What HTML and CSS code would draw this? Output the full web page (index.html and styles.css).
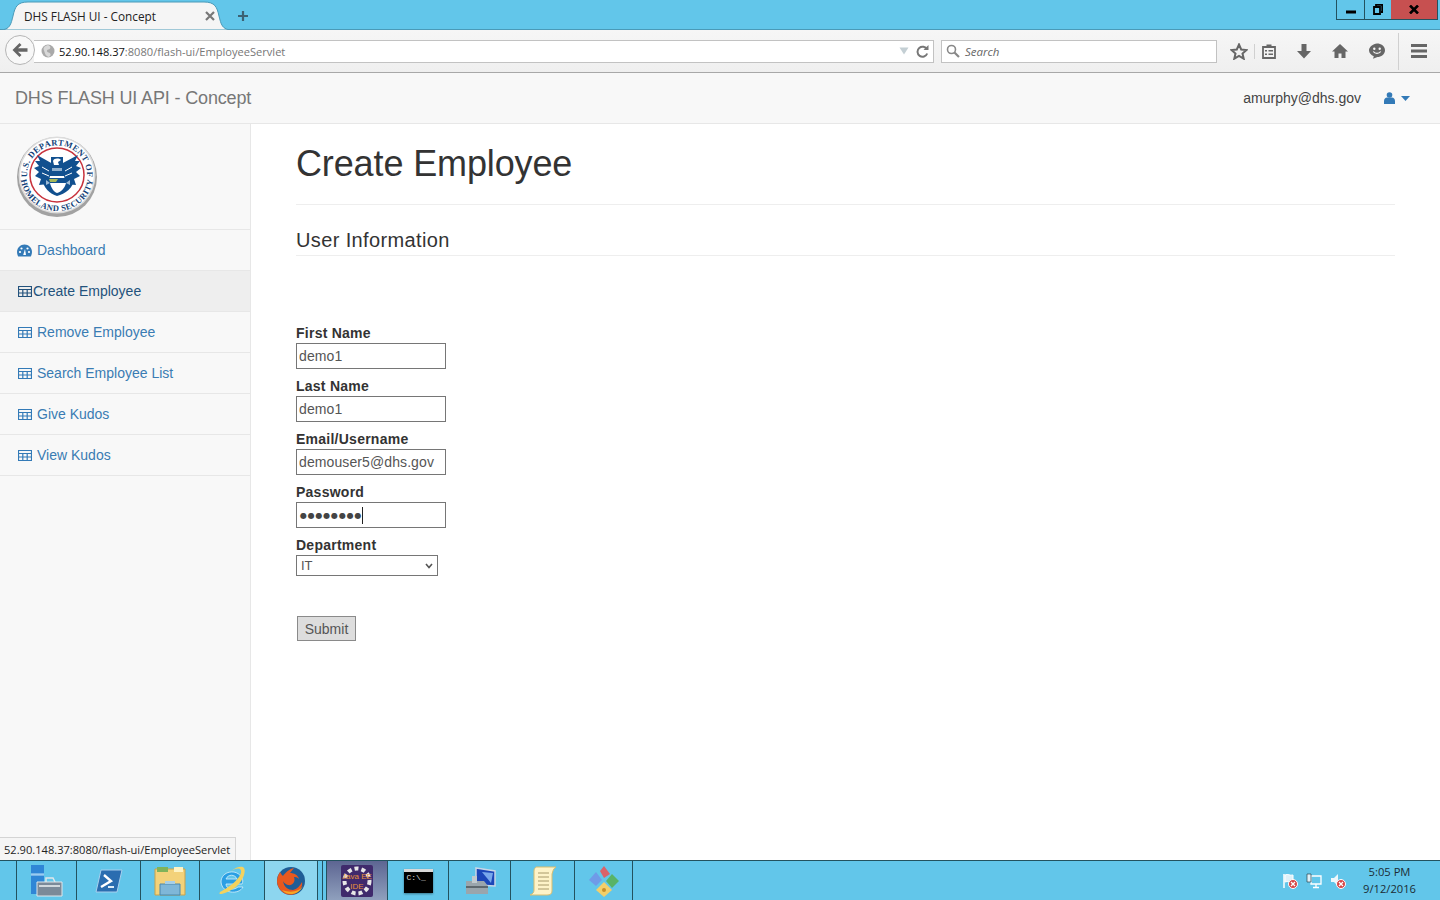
FILE: index.html
```html
<!DOCTYPE html>
<html lang="en">
<head>
  <meta charset="UTF-8" />
  <meta name="viewport" content="width=device-width, initial-scale=1.0" />
  <title>DHS FLASH UI - Concept</title>
  <link rel="stylesheet" href="styles.css">
</head>
<body>
  <div class="desktop">

    <!-- browser tabs -->
    <div class="tabstrip">
      <div class="tab">
        <svg class="tab-shape" width="228" height="30" viewBox="0 0 228 30"><path d="M0 30 C10 30 11 24 13 16 C15 7 17 2 28 2 H204 C215 2 217 7 219 16 C221 24 222 30 232 30 Z" fill="#f5f5f5" stroke="#4a9ab8"/></svg>
        <span class="tab-title">DHS FLASH UI - Concept</span>
        <svg class="tab-close" width="10" height="10" viewBox="0 0 10 10"><path d="M1 1 9 9M9 1 1 9" stroke="#777" stroke-width="2.2"/></svg>
      </div>
      <svg class="tab-new" width="12" height="12" viewBox="0 0 12 12"><path d="M6 1V11M1 6H11" stroke="#3c6274" stroke-width="2.2"/></svg>
      <div class="window-btns">
        <div class="win-btn win-min"><svg width="10" height="10" viewBox="0 0 10 10"><path d="M0 7H10" stroke="#000" stroke-width="3"/></svg></div>
        <div class="win-btn win-max"><svg width="10" height="11" viewBox="0 0 10 11"><path d="M3 2V0.8H9.2V8H8M1 3H7V10H1Z" fill="none" stroke="#000" stroke-width="1.8"/></svg></div>
        <div class="win-btn win-close"><svg width="10" height="9" viewBox="0 0 10 9"><path d="M1 0.5 9 8.5M9 0.5 1 8.5" stroke="#000" stroke-width="2.6"/></svg></div>
      </div>
    </div>

    <!-- browser toolbar -->
    <div class="toolbar">
      <div class="back-btn">
        <svg width="16" height="14" viewBox="0 0 16 14"><path d="M7.5 0 0.5 7 7.5 14 9.5 12 6 8.8H15.5V5.2H6L9.5 2Z" fill="#666"/></svg>
      </div>
      <div class="urlbar">
        <svg class="globe" width="14" height="14" viewBox="0 0 14 14"><circle cx="7" cy="7" r="6.5" fill="#a9a9a9"/><path d="M7 1C9 2 10 3 9 4.5S6 5 6 7s3 1 3.500 3-1 2.500-2 3C5 12 4 10 3.500 8S2 5 3 3.500 5 1.500 7 1Z" fill="#d8d8d8"/></svg>
        <span class="url"><b>52.90.148.37</b>:8080/flash-ui/EmployeeServlet</span>
        <svg class="url-drop" width="10" height="8" viewBox="0 0 10 8"><path d="M0.500 0.500H9.500L5 7.500Z" fill="#c4cfd4"/></svg>
        <svg class="url-reload" width="13" height="13" viewBox="0 0 13 13"><path d="M11 4.500A5 5 0 1 0 11.200 8.500" fill="none" stroke="#777" stroke-width="2"/><path d="M7.500 5H12.500V0Z" fill="#777"/></svg>
      </div>
      <div class="searchbar">
        <svg width="14" height="14" viewBox="0 0 14 14"><circle cx="5.500" cy="5.500" r="4" fill="none" stroke="#888" stroke-width="1.600"/><path d="M8.500 8.500 13 13" stroke="#888" stroke-width="2.200"/></svg>
        <span>Search</span>
      </div>
      <div class="tool-icons">
        <svg class="tool tool-star" width="18" height="17" viewBox="0 0 18 17"><path d="M9 1.500 11.200 6.500 16.500 7 12.500 10.500 13.700 15.700 9 13 4.300 15.700 5.500 10.500 1.500 7 6.800 6.500Z" fill="none" stroke="#666" stroke-width="2"/></svg>
        <i class="tool-sep"></i>
        <svg class="tool tool-list" width="14" height="15" viewBox="0 0 14 15"><path d="M1 3H13V14H1Z" fill="none" stroke="#666" stroke-width="1.800"/><path d="M4.500 0.500H9.500V3.500H4.500ZM3 6H5V7.500H3ZM6.500 6H11V7.500H6.500ZM3 9.500H5V11H3ZM6.500 9.500H11V11H6.500Z" fill="#666"/></svg>
        <svg class="tool tool-down" width="14" height="15" viewBox="0 0 14 15"><path d="M4.500 0H9.500V7H14L7 14.500 0 7H4.500Z" fill="#666"/></svg>
        <svg class="tool tool-home" width="16" height="14" viewBox="0 0 16 14"><path d="M8 0 16 7.500H13.500V14H9.500V9.500H6.500V14H2.500V7.500H0Z" fill="#666"/></svg>
        <svg class="tool tool-chat" width="16" height="16" viewBox="0 0 16 16"><path d="M8 0.500C12 0.500 16 3 16 7.200S12 14 8.500 14L4 15.800 4.800 13.200C2 12 0 10 0 7.200S4 0.500 8 0.500Z" fill="#666"/><circle cx="5.300" cy="5.800" r="1.200" fill="#f5f5f5"/><circle cx="10.700" cy="5.800" r="1.200" fill="#f5f5f5"/><path d="M4.300 8.500C6 11 10 11 11.700 8.500" fill="none" stroke="#f5f5f5" stroke-width="1.300"/></svg>
        <i class="tool-sep tool-sep-tall"></i>
        <svg class="tool tool-menu" width="16" height="14" viewBox="0 0 16 14"><path d="M0 0H16V3H0ZM0 5.500H16V8.500H0ZM0 11H16V14H0Z" fill="#666"/></svg>
      </div>
    </div>

    <!-- app header -->
    <header class="navbar">
      <div class="brand">DHS FLASH UI API - Concept</div>
      <div class="user">
        <span class="user-name">amurphy@dhs.gov</span>
        <svg class="user-icon" width="11" height="12" viewBox="0 0 11 12"><circle cx="5.500" cy="3" r="2.800" fill="#337ab7"/><path d="M0 12V9C0 7 1.500 5.500 3 5.500H8C9.500 5.500 11 7 11 9V12Z" fill="#337ab7"/></svg>
        <svg class="user-caret" width="9" height="5" viewBox="0 0 9 5"><path d="M0 0H9L4.500 5Z" fill="#337ab7"/></svg>
      </div>
    </header>

    <div class="main">
      <aside class="sidebar">
        <div class="logo">
          <svg width="84" height="84" viewBox="0 0 84 84">
            <defs>
              <path id="sealTop" d="M13 49A30 30 0 1 1 71 49"/>
              <path id="sealBottom" d="M5.800 36A36.500 36.500 0 1 0 78.200 36"/>
            </defs>
            <circle cx="42" cy="43" r="40" fill="#a2a2a2"/>
            <circle cx="42" cy="41" r="38.500" fill="#dcdcdc"/>
            <circle cx="42" cy="41" r="37" fill="#fff"/>
            <text class="seal-text"><textPath href="#sealTop" startOffset="50%" text-anchor="middle">U.S. DEPARTMENT OF</textPath></text>
            <text class="seal-text"><textPath href="#sealBottom" startOffset="50%" text-anchor="middle">HOMELAND SECURITY</textPath></text>
            <circle cx="42" cy="41" r="27" fill="#fff" stroke="#c8323c" stroke-width="1.500"/>
            <!-- eagle -->
            <path d="M38 30 22 21 25 27 20 27 24 32 19 34 24 38 20 42 26 45 24 51 33 50Z" fill="#11508f"/>
            <path d="M46 30 63 21 60 27 65 27 61 32 66 34 61 38 65 42 59 45 61 51 51 50Z" fill="#11508f"/>
            <path d="M27 33 34 37M27 39 34 42M57 33 50 37M57 39 50 42" stroke="#fff" stroke-width="1"/>
            <path d="M36 23H48V32H36Z" fill="#11508f"/>
            <path d="M38 27C39 24 44 24 46 26L43 28 44 31H39Z" fill="#fff"/>
            <path d="M35 32H49V42H35Z" fill="#11508f"/>
            <path d="M37 34H47V37H37Z" fill="#8fb0cf"/>
            <path d="M27 44H59C59 54 50 60 42 62 35 60 28 54 27 44Z" fill="#11508f"/>
            <path d="M31 46 35 49 31 51ZM55 46 51 49 55 51Z" fill="#9dbbd6"/>
            <path d="M35 49H51C50 54 46 58 42 59 39 58 36 54 35 49Z" fill="#fff"/>
            <path d="M34 45H43L41 48H35Z" fill="#a4b85a"/>
          </svg>
        </div>
        <nav class="side-nav">
          <a class="side-link">
            <svg class="side-icon" width="15" height="13" viewBox="0 0 15 13"><path d="M7.500 0.500C3.400 0.500 0 3.800 0 8C0 9.500 0.400 11 1.200 12.500H13.800C14.600 11 15 9.500 15 8 15 3.800 11.600 0.500 7.500 0.500Z" fill="#337ab7"/><circle cx="3" cy="8" r="1.100" fill="#fff"/><circle cx="4.500" cy="4.500" r="1.100" fill="#fff"/><circle cx="12" cy="8" r="1.100" fill="#fff"/><circle cx="10.500" cy="4.500" r="1.100" fill="#fff"/><path d="M6.200 11 8 5 9 11Z" fill="#fff"/></svg>
            Dashboard
          </a>
          <a class="side-link side-link-active">
            <svg class="side-icon" width="14" height="11" viewBox="0 0 14 11"><path d="M0.500 0.500H13.500V10.500H0.500ZM0.500 3.500H13.500M0.500 7H13.500M4.800 3.500V10.500M9.200 3.500V10.500" fill="none" stroke="#23527c" stroke-width="1.200"/></svg>Create Employee
          </a>
          <a class="side-link">
            <svg class="side-icon" width="14" height="11" viewBox="0 0 14 11"><path d="M0.500 0.500H13.500V10.500H0.500ZM0.500 3.500H13.500M0.500 7H13.500M4.800 3.500V10.500M9.200 3.500V10.500" fill="none" stroke="#337ab7" stroke-width="1.200"/></svg>
            Remove Employee
          </a>
          <a class="side-link">
            <svg class="side-icon" width="14" height="11" viewBox="0 0 14 11"><path d="M0.500 0.500H13.500V10.500H0.500ZM0.500 3.500H13.500M0.500 7H13.500M4.800 3.500V10.500M9.200 3.500V10.500" fill="none" stroke="#337ab7" stroke-width="1.200"/></svg>
            Search Employee List
          </a>
          <a class="side-link">
            <svg class="side-icon" width="14" height="11" viewBox="0 0 14 11"><path d="M0.500 0.500H13.500V10.500H0.500ZM0.500 3.500H13.500M0.500 7H13.500M4.800 3.500V10.500M9.200 3.500V10.500" fill="none" stroke="#337ab7" stroke-width="1.200"/></svg>
            Give Kudos
          </a>
          <a class="side-link">
            <svg class="side-icon" width="14" height="11" viewBox="0 0 14 11"><path d="M0.500 0.500H13.500V10.500H0.500ZM0.500 3.500H13.500M0.500 7H13.500M4.800 3.500V10.500M9.200 3.500V10.500" fill="none" stroke="#337ab7" stroke-width="1.200"/></svg>
            View Kudos
          </a>
        </nav>
      </aside>

      <main class="content">
        <h1 class="page-title">Create Employee</h1>
        <h3 class="section-title">User Information</h3>
        <form class="emp-form">
          <label class="field-label" for="firstName">First Name</label>
          <input class="field" id="firstName" type="text" value="demo1">
          <label class="field-label" for="lastName">Last Name</label>
          <input class="field" id="lastName" type="text" value="demo1">
          <label class="field-label" for="email">Email/Username</label>
          <input class="field" id="email" type="text" value="demouser5@dhs.gov">
          <label class="field-label" for="password">Password</label>
          <div class="field field-pass" id="password"><span class="dots">●●●●●●●●</span><i class="caret"></i></div>
          <label class="field-label" for="department">Department</label>
          <select class="dept" id="department"><option>IT</option></select>
          <button class="submit" type="button">Submit</button>
        </form>
      </main>

      <div class="status-tip">52.90.148.37:8080/flash-ui/EmployeeServlet</div>
    </div>

    <!-- windows taskbar -->
    <footer class="taskbar">
      <div class="task-btn task-w60">
        <svg width="34" height="32" viewBox="0 0 34 32"><path d="M1 0H14V29H1Z" fill="#2f86d6"/><path d="M1 9H14M1 10H14" stroke="#bfe2f8"/><path d="M16 17V13H23L25 17" fill="none" stroke="#dfe6ea" stroke-width="1.500"/><path d="M7 17H32V31H7Z" fill="#7b8a99" stroke="#dfe6ea"/><path d="M9 21H30" stroke="#eef2f4" stroke-width="1.500"/></svg>
      </div>
      <div class="task-btn task-w64">
        <svg width="28" height="24" viewBox="0 0 28 24"><path d="M6 1H27L22 23H1Z" fill="#2a6db0" stroke="#a8d0ee"/><path d="M9 6 16 12 6 18" fill="none" stroke="#fff" stroke-width="2.400"/><path d="M13 18H19" stroke="#dcecf8" stroke-width="2"/></svg>
      </div>
      <div class="task-btn task-w59">
        <svg width="32" height="30" viewBox="0 0 32 30"><path d="M1 3H31V29H1Z" fill="#f3d27a" stroke="#c9a24a"/><path d="M3 1H14V6H3Z" fill="#7fb35a"/><path d="M20 1H29V6H20Z" fill="#fdf3c4"/><path d="M6 18H26V29H6Z" fill="#7fb7d8" stroke="#4a88ad"/><path d="M11 15H21V18H11Z" fill="#a8cfe6"/></svg>
      </div>
      <div class="task-btn task-w65">
        <svg width="32" height="32" viewBox="0 0 32 32"><path d="M26 19H10C10 24 17 26 22 22H27C23 30 6 29 5 17 5 6 21 3 26 13 27 15 27 17 26 19ZM21 14C19 9 12 9 10 14Z" fill="#2a9fe4" stroke="#d7f0fb" stroke-width="0.800"/><path d="M4 27C1 31 10 29 20 22 28 15 31 4 27 2 24 1 20 2 15 6 22 2 26 3 25 8 23 15 12 23 4 27Z" fill="#f3d25e"/></svg>
      </div>
      <div class="task-btn task-btn-open">
        <svg width="32" height="32" viewBox="0 0 32 32"><circle cx="16" cy="16" r="14" fill="#1f5d96"/><path d="M19 3 15 8C19 8 23 10 24 14 22 12 20 12 19 12 21 17 17 21 13 20 11 19.500 9 18 8 16 9 22 13 25 18 25 22 24 25 21 27 17 28 21 25 27 18 29.500 11 31 3 26 2 17 2 13 3 10 5 7 6 9 7 10 8 11 10 8 14 4 19 3Z" fill="#e8591f"/><path d="M7 25C12 31 23 31 28 21 24 27 15 28 7 25Z" fill="#f6a623"/></svg>
      </div>
      <div class="task-spacer"></div>
      <div class="task-btn task-btn-eclipse">
        <svg width="32" height="32" viewBox="0 0 32 32">
          <rect width="32" height="32" rx="2" fill="#3f2a6c"/>
          <circle cx="16" cy="16" r="12.500" fill="none" stroke="#e8e8e8" stroke-width="4" stroke-dasharray="4 3"/>
          <text class="eclipse-text" x="16" y="14" text-anchor="middle">Java EE</text>
          <text class="eclipse-text" x="16" y="24" text-anchor="middle">IDE</text>
        </svg>
      </div>
      <div class="task-btn task-w61">
        <div class="cmd-icon"><span class="cmd-bar"></span><span class="cmd-text">C:\_</span></div>
      </div>
      <div class="task-btn">
        <svg width="32" height="30" viewBox="0 0 32 30"><path d="M12 2 31 5V20L12 19Z" fill="#1c46b8" stroke="#c8d6e6" stroke-width="1.500"/><path d="M18 6 29 7 27 17Z" fill="#79a8ec"/><path d="M2 15H20L24 20V28H2Z" fill="#9aa5ac"/><path d="M2 21H24" stroke="#5e686e" stroke-width="2"/><path d="M8 10H13V17H8Z" fill="#c2cace"/></svg>
      </div>
      <div class="task-btn task-w64">
        <svg width="28" height="30" viewBox="0 0 28 30"><path d="M7 1H27C24 3 24 5 23 8V25C23 28 21 29 18 29H1C4 28 5 26 5 24V5C5 3 6 2 7 1Z" fill="#fdf3c8" stroke="#d8bd6e"/><path d="M9 7H20M9 11H20M9 15H20M9 19H20M9 23H20" stroke="#a89a6a"/></svg>
      </div>
      <div class="task-btn task-w59 task-btn-last">
        <svg width="32" height="32" viewBox="0 0 32 32"><path d="M16 1 22 9 16 13 12 6Z" fill="#d9626a"/><path d="M8 7 14 15 8 21 1 15Z" fill="#6f9be8"/><path d="M24 9 31 16 24 23 18 16Z" fill="#58b368"/><path d="M16 17 24 25 16 32 8 25Z" fill="#f3cf6a"/><circle cx="16" cy="25" r="2" fill="#c78f2a"/></svg>
      </div>
      <div class="tray">
        <svg width="16" height="16" viewBox="0 0 16 16"><path d="M2 1V15" stroke="#fff" stroke-width="1.500"/><path d="M3 2C6 0.500 8 3 11 2V9C8 10 6 7.500 3 9Z" fill="#dff1f9" stroke="#fff"/><circle cx="11" cy="11" r="4.500" fill="#d64545" stroke="#fff"/><path d="M9 9 13 13M13 9 9 13" stroke="#fff" stroke-width="1.300"/></svg>
        <svg width="16" height="16" viewBox="0 0 16 16"><path d="M5 3H15V11H5Z" fill="none" stroke="#fff" stroke-width="1.300"/><path d="M1 1H5V9H1Z" fill="#dff1f9" stroke="#28434f" stroke-width="0.700"/><path d="M10 11V14M7 14.500H13" stroke="#fff" stroke-width="1.300"/></svg>
        <svg width="16" height="16" viewBox="0 0 16 16"><path d="M1 5H4L8 1V13L4 9H1Z" fill="#eef7fb"/><circle cx="11" cy="11" r="4.500" fill="#d64545" stroke="#fff"/><path d="M9 9 13 13M13 9 9 13" stroke="#fff" stroke-width="1.300"/></svg>
        <div class="clock"><span>5:05 PM</span><span>9/12/2016</span></div>
      </div>
    </footer>
  </div>
</body>
</html>
```

FILE: styles.css
```css
* {
  box-sizing: border-box;
}
body {
  margin: 0;
  font-family: "Liberation Sans", Arial, sans-serif;
  color: #333;
  background: #fff;
}
.desktop {
  width: 1440px;
  height: 900px;
  display: flex;
  flex-direction: column;
  overflow: hidden;
}

/* tabs */
.tabstrip {
  height: 30px;
  background: #62c6ea;
  border-bottom: 1px solid #4a9ab8;
  display: flex;
  align-items: flex-start;
  flex: none;
}
.tab {
  position: relative;
  width: 228px;
  height: 30px;
  display: flex;
  align-items: center;
  padding: 1px 13px 0 24px;
  flex: none;
}
.tab-shape {
  position: absolute;
  left: 0;
  top: 0;
}
.tab-title {
  position: relative;
  font-family: "Open Sans", sans-serif;
  font-size: 11.800px;
  color: #222;
  flex: 1;
}
.tab-close {
  position: relative;
}
.tab-new {
  margin: 10px 0 0 9px;
}
.window-btns {
  margin-left: auto;
  margin-right: 2px;
  display: flex;
  height: 20px;
  border: 1px solid #23525f;
  border-top: 0;
}
.win-btn {
  height: 19px;
  display: flex;
  align-items: center;
  justify-content: center;
}
.win-min {
  width: 28px;
  border-right: 1px solid #23525f;
}
.win-max {
  width: 26px;
}
.win-close {
  width: 46px;
  background: #c75050;
}

/* toolbar */
.toolbar {
  height: 43px;
  flex: none;
  background: linear-gradient(#f6f6f6, #efefef);
  border-bottom: 1px solid #a8a8a8;
  display: flex;
  align-items: center;
  position: relative;
  padding-left: 32px;
}
.back-btn {
  position: absolute;
  left: 5px;
  top: 5px;
  width: 30px;
  height: 30px;
  border-radius: 50%;
  background: #f8f8f8;
  border: 1px solid #b5b5b5;
  display: flex;
  align-items: center;
  justify-content: center;
}
.urlbar {
  width: 900px;
  height: 23px;
  margin-left: 2px;
  background: #fff;
  border: 1px solid #c2c2c2;
  border-left: 0;
  display: flex;
  align-items: center;
  padding: 0 4px 0 7px;
}
.url {
  font-family: "Open Sans", sans-serif;
  font-size: 11.100px;
  color: #777;
  margin-left: 4px;
  flex: 1;
}
.url b {
  font-weight: 400;
  color: #111;
}
.url-drop {
  margin-right: 1px;
}
.url-reload {
  margin-left: 6px;
}
.searchbar {
  width: 276px;
  height: 23px;
  margin-left: 7px;
  background: #fff;
  border: 1px solid #c2c2c2;
  display: flex;
  align-items: center;
  gap: 5px;
  padding-left: 4px;
  font-family: "Open Sans", sans-serif;
  font-size: 11.500px;
  font-style: italic;
  color: #666;
}
.tool-icons {
  flex: 1;
  display: flex;
  align-items: center;
  position: relative;
  height: 100%;
}
.tool-star {
  margin-left: 13px;
}
.tool-sep {
  width: 1px;
  height: 15px;
  background: #d0d0d0;
  margin-left: 6px;
}
.tool-list {
  margin-left: 7px;
}
.tool-down {
  margin-left: 21px;
}
.tool-home {
  margin-left: 21px;
}
.tool-chat {
  margin-left: 21px;
}
.tool-sep-tall {
  height: 37px;
  margin-left: 13px;
}
.tool-menu {
  margin-left: 12px;
}

/* app header */
.navbar {
  height: 51px;
  flex: none;
  background: #f8f8f8;
  border-bottom: 1px solid #e7e7e7;
  display: flex;
  align-items: center;
  justify-content: space-between;
  padding: 0 30px 0 15px;
}
.brand {
  font-size: 18px;
  letter-spacing: -0.150px;
  color: #777;
}
.user {
  display: flex;
  align-items: center;
  font-size: 14px;
  color: #444;
}
.user-name {
  margin-right: 23px;
}
.user-caret {
  margin-left: 6px;
}

/* sidebar */
.main {
  flex: 1;
  display: flex;
  position: relative;
  min-height: 0;
}
.sidebar {
  width: 251px;
  flex: none;
  background: #f8f8f8;
  border-right: 1px solid #e7e7e7;
}
.logo {
  height: 106px;
  padding: 10px 0 0 15px;
  border-bottom: 1px solid #e7e7e7;
}
.seal-text {
  font-family: "Liberation Serif", serif;
  font-size: 8.500px;
  font-weight: 700;
  letter-spacing: 0.400px;
  fill: #123f78;
}
.side-nav {
  display: flex;
  flex-direction: column;
}
.side-link {
  height: 41px;
  display: flex;
  align-items: center;
  padding-left: 17px;
  font-size: 14px;
  color: #3a7cb3;
  border-bottom: 1px solid #e7e7e7;
}
.side-icon {
  margin: 0 5px 0 1px;
  flex: none;
}
.side-link:first-child .side-icon {
  margin: 0 5px 0 0;
}
.side-link-active {
  background: #eee;
  color: #23527c;
}
.side-link-active .side-icon {
  margin-right: 1px;
}
.status-tip {
  position: absolute;
  left: 0;
  bottom: 0;
  width: 236px;
  height: 23px;
  padding: 4px 0 0 4px;
  background: #f5f5f5;
  border: 1px solid #d4d4d4;
  border-left: 0;
  border-bottom: 0;
  font-family: "Open Sans", sans-serif;
  font-size: 11.100px;
  white-space: nowrap;
  color: #222;
}

/* form */
.content {
  flex: 1;
  padding: 0 45px;
}
.page-title {
  margin: 0;
  height: 81px;
  padding-top: 20px;
  border-bottom: 1px solid #eee;
  font-size: 36px;
  font-weight: 500;
  letter-spacing: -0.130px;
  line-height: 40px;
}
.section-title {
  margin: 0;
  height: 51px;
  padding-top: 24px;
  border-bottom: 1px solid #eee;
  font-size: 20px;
  font-weight: 500;
  letter-spacing: 0.370px;
  line-height: 22px;
}
.emp-form {
  display: flex;
  flex-direction: column;
  align-items: flex-start;
  padding-top: 69px;
}
.field-label {
  font-size: 14px;
  font-weight: 700;
  letter-spacing: 0.250px;
  line-height: 16px;
  height: 18px;
}
.field {
  width: 150px;
  height: 26px;
  margin-bottom: 9px;
  padding: 0 2px;
  border: 1px solid #767676;
  background: #fff;
  font-family: "Liberation Sans", Arial, sans-serif;
  font-size: 14px;
  letter-spacing: 0.100px;
  color: #555;
}
.field-pass {
  display: flex;
  align-items: center;
  padding-left: 3px;
}
.dots {
  font-family: "DejaVu Sans", sans-serif;
  font-size: 8px;
  letter-spacing: 0.800px;
  color: #444;
}
.caret {
  width: 1px;
  height: 17px;
  background: #222;
}
.dept {
  appearance: none;
  width: 142px;
  height: 21px;
  border: 1px solid #767676;
  background: #fff url("data:image/svg+xml,%3Csvg xmlns='http://www.w3.org/2000/svg' width='8' height='6'%3E%3Cpath d='M1 1 4 4.500 7 1' fill='none' stroke='%23555' stroke-width='1.600'/%3E%3C/svg%3E") no-repeat 128px 7px;
  padding: 0 0 0 4px;
  font-family: "Liberation Sans", Arial, sans-serif;
  font-size: 13px;
  color: #555;
}
.submit {
  width: 59px;
  height: 25px;
  margin: 40px 0 0 1px;
  padding: 0;
  background: #ddd;
  border: 1px solid #8a8a8a;
  border-radius: 0;
  font-family: "Liberation Sans", Arial, sans-serif;
  font-size: 14px;
  color: #555;
}

/* taskbar */
.taskbar {
  height: 40px;
  flex: none;
  background: #62c6ea;
  border-top: 1px solid #23525f;
  display: flex;
  padding-left: 16px;
}
.task-btn {
  width: 62px;
  height: 39px;
  border-left: 1px solid #23525f;
  display: flex;
  align-items: center;
  justify-content: center;
}
.task-w59 {
  width: 59px;
}
.task-w60 {
  width: 60px;
}
.task-w61 {
  width: 61px;
}
.task-w64 {
  width: 64px;
}
.task-w65 {
  width: 65px;
}
.task-btn-last {
  border-right: 1px solid #23525f;
}
.task-btn-open {
  width: 54px;
  background: #8dd6ef;
  border-right: 1px solid #23525f;
}
.task-spacer {
  width: 4px;
  margin-left: 4px;
  border-left: 1px solid #23525f;
}
.task-btn-eclipse {
  width: 61px;
  background: linear-gradient(#5d6592, #8fa0bd);
}
.eclipse-text {
  font-family: "Liberation Sans", Arial, sans-serif;
  font-size: 8px;
  fill: #e8913a;
}
.cmd-icon {
  width: 29px;
  height: 24px;
  background: #000;
  display: flex;
  flex-direction: column;
  box-shadow: 0 1px 2px rgba(0,0,0,0.4);
}
.cmd-bar {
  height: 3px;
  background: #d8d8d8;
}
.cmd-text {
  font-family: "Liberation Mono", monospace;
  font-size: 8px;
  line-height: 12px;
  color: #ddd;
  padding-left: 3px;
}
.tray {
  margin-left: auto;
  display: flex;
  align-items: center;
  gap: 8px;
  padding-right: 24px;
}
.tray svg {
  flex: none;
}
.clock {
  margin: -2px 0 0 9px;
  display: flex;
  flex-direction: column;
  align-items: center;
  font-family: "Open Sans", sans-serif;
  font-size: 11.200px;
  line-height: 17px;
  color: #1c2c34;
}
```
